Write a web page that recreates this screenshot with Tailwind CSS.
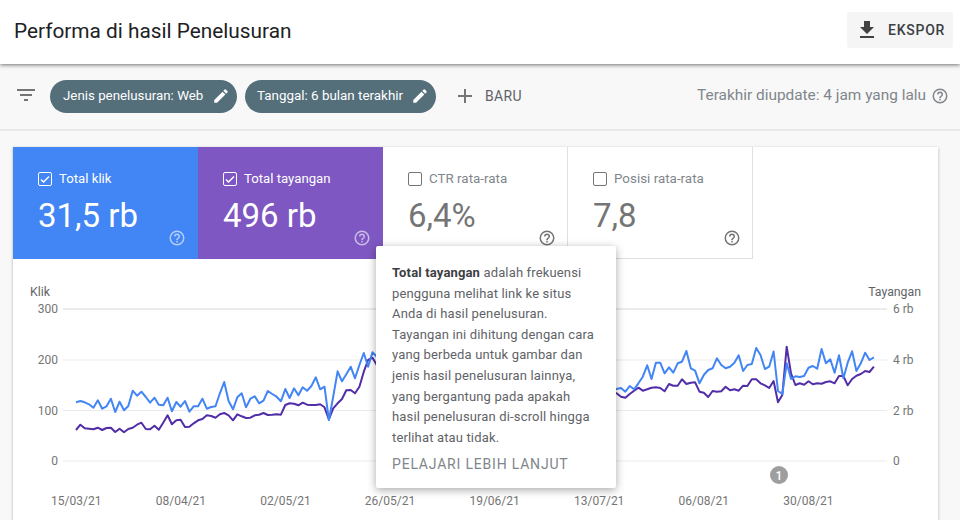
<!DOCTYPE html>
<html lang="en">
  <head>
    <meta charset="UTF-8" />
    <title>Performa di hasil Penelusuran</title>
    <script src="https://cdn.jsdelivr.net/npm/@tailwindcss/browser@4"></script>
  </head>
  <body class="w-[960px] h-[520px] overflow-hidden bg-[#f8f8f8] font-[Roboto,sans-serif]">
    <!-- header -->
    <header class="relative z-10 h-[64px] bg-white shadow-[0_1px_4px_rgba(0,0,0,0.55)] flex items-center justify-between pl-[14px] pr-[7px]">
      <h1 class="text-[20.8px] leading-[28px] text-[#202124] -mt-[2px]">Performa di hasil Penelusuran</h1>
      <button class="w-[106px] h-[36px] rounded-[3px] bg-[#f5f5f5] flex items-center pl-[8px] text-[#3c4043] -mt-[4px]">
        <svg class="w-[24px] h-[24px]" viewBox="0 0 24 24" fill="#424242"><path d="M19 9h-4V3H9v6H5l7 7 7-7zM5 18v2h14v-2H5z" /></svg>
        <span class="ml-[9px] text-[14px] font-medium tracking-[0.75px]">EKSPOR</span>
      </button>
    </header>

    <!-- filter bar -->
    <div class="h-[67px] border-b-2 border-[#e8e8e8] flex items-center pb-[1px] pl-[14px] pr-[10px]">
      <svg class="w-[24px] h-[24px] text-[#757575] -mt-[2px]" viewBox="0 0 24 24" fill="currentColor"><path d="M10 18h4v-2h-4v2zM3 6v2h18V6H3zm3 7h12v-2H6v2z" /></svg>
      <div class="ml-[12px] h-[33px] w-[187px] rounded-full bg-[#546e7a] flex items-center justify-between pl-[13px] pr-[7px] text-white text-[13.3px]">
        <span>Jenis penelusuran: Web</span>
        <svg class="w-[18px] h-[18px]" viewBox="0 0 24 24" fill="#fff"><path d="M3 17.25V21h3.75L17.81 9.94l-3.75-3.75L3 17.25zM20.71 7.04a1 1 0 0 0 0-1.41l-2.34-2.34a1 1 0 0 0-1.41 0l-1.83 1.83 3.75 3.75 1.83-1.83z" /></svg>
      </div>
      <div class="ml-[8px] h-[33px] w-[191px] rounded-full bg-[#546e7a] flex items-center justify-between pl-[12px] pr-[7px] text-white text-[13.4px]">
        <span>Tanggal: 6 bulan terakhir</span>
        <svg class="w-[18px] h-[18px]" viewBox="0 0 24 24" fill="#fff"><path d="M3 17.25V21h3.75L17.81 9.94l-3.75-3.75L3 17.25zM20.71 7.04a1 1 0 0 0 0-1.41l-2.34-2.34a1 1 0 0 0-1.41 0l-1.83 1.83 3.75 3.75 1.83-1.83z" /></svg>
      </div>
      <svg class="ml-[17px] w-[24px] h-[24px]" viewBox="0 0 24 24" fill="#757575"><path d="M19 13h-6v6h-2v-6H5v-2h6V5h2v6h6v2z" /></svg>
      <span class="ml-[8px] text-[14px] tracking-[0.3px] text-[#5f6368]">BARU</span>
      <span class="ml-auto text-[15.4px] text-[#80868b]">Terakhir diupdate: 4 jam yang lalu</span>
      <svg class="ml-[5px] mr-[1px] w-[18px] h-[18px]" viewBox="0 0 24 24" fill="#80868b"><path d="M11 18h2v-2h-2v2zm1-16a10 10 0 1 0 0 20 10 10 0 0 0 0-20zm0 18a8 8 0 1 1 0-16 8 8 0 0 1 0 16zm0-14a4 4 0 0 0-4 4h2a2 2 0 1 1 4 0c0 2-3 1.75-3 5h2c0-2.25 3-2.5 3-5a4 4 0 0 0-4-4z" /></svg>
    </div>

    <!-- main card -->
    <main class="relative mt-[16px] ml-[13px] w-[925px] h-[373px] bg-white shadow-[0_1px_3px_rgba(0,0,0,0.28)]">
      <div class="flex h-[112px]">
        <div class="w-[185px] bg-[#4285f4] text-white relative pl-[25px] pt-[24px]">
          <div class="flex items-center gap-[7px] text-[13.2px] leading-[16px]">
            <span class="w-[14px] h-[14px] border border-white rounded-[2px] flex items-center justify-center">
              <svg class="w-[12px] h-[12px]" viewBox="0 0 24 24" fill="#fff"><path d="M9 16.2 4.8 12l-1.9 1.9L9 20 21 8l-1.9-1.9z" /></svg>
            </span>
            Total klik
          </div>
          <div class="mt-[9px] text-[33px] leading-[40px]">31,5 rb</div>
          <svg class="absolute right-[12px] bottom-[12px] w-[18px] h-[18px]" viewBox="0 0 24 24" fill="#ffffff" fill-opacity="0.6"><path d="M11 18h2v-2h-2v2zm1-16a10 10 0 1 0 0 20 10 10 0 0 0 0-20zm0 18a8 8 0 1 1 0-16 8 8 0 0 1 0 16zm0-14a4 4 0 0 0-4 4h2a2 2 0 1 1 4 0c0 2-3 1.75-3 5h2c0-2.25 3-2.5 3-5a4 4 0 0 0-4-4z" /></svg>
        </div>
        <div class="w-[185px] bg-[#7e57c2] text-white relative pl-[25px] pt-[24px]">
          <div class="flex items-center gap-[7px] text-[13.2px] leading-[16px]">
            <span class="w-[14px] h-[14px] border border-white rounded-[2px] flex items-center justify-center">
              <svg class="w-[12px] h-[12px]" viewBox="0 0 24 24" fill="#fff"><path d="M9 16.2 4.8 12l-1.9 1.9L9 20 21 8l-1.9-1.9z" /></svg>
            </span>
            Total tayangan
          </div>
          <div class="mt-[9px] text-[33px] leading-[40px]">496 rb</div>
          <svg class="absolute right-[12px] bottom-[12px] w-[18px] h-[18px]" viewBox="0 0 24 24" fill="#ffffff" fill-opacity="0.6"><path d="M11 18h2v-2h-2v2zm1-16a10 10 0 1 0 0 20 10 10 0 0 0 0-20zm0 18a8 8 0 1 1 0-16 8 8 0 0 1 0 16zm0-14a4 4 0 0 0-4 4h2a2 2 0 1 1 4 0c0 2-3 1.75-3 5h2c0-2.25 3-2.5 3-5a4 4 0 0 0-4-4z" /></svg>
        </div>
        <div class="w-[185px] border-r border-b border-[#e0e0e0] text-[#757575] relative pl-[25px] pt-[24px]">
          <div class="flex items-center gap-[7px] text-[13.4px] leading-[16px] text-[#80868b]">
            <span class="w-[14px] h-[14px] border border-[#757575] rounded-[2px]"></span>
            CTR rata-rata
          </div>
          <div class="mt-[9px] text-[33px] leading-[40px]">6,4%</div>
          <svg class="absolute right-[11px] bottom-[11px] w-[18px] h-[18px]" viewBox="0 0 24 24" fill="#757575"><path d="M11 18h2v-2h-2v2zm1-16a10 10 0 1 0 0 20 10 10 0 0 0 0-20zm0 18a8 8 0 1 1 0-16 8 8 0 0 1 0 16zm0-14a4 4 0 0 0-4 4h2a2 2 0 1 1 4 0c0 2-3 1.75-3 5h2c0-2.25 3-2.5 3-5a4 4 0 0 0-4-4z" /></svg>
        </div>
        <div class="w-[185px] border-r border-b border-[#e0e0e0] text-[#757575] relative pl-[25px] pt-[24px]">
          <div class="flex items-center gap-[7px] text-[13.4px] leading-[16px] text-[#80868b]">
            <span class="w-[14px] h-[14px] border border-[#757575] rounded-[2px]"></span>
            Posisi rata-rata
          </div>
          <div class="mt-[9px] text-[33px] leading-[40px]">7,8</div>
          <svg class="absolute right-[11px] bottom-[11px] w-[18px] h-[18px]" viewBox="0 0 24 24" fill="#757575"><path d="M11 18h2v-2h-2v2zm1-16a10 10 0 1 0 0 20 10 10 0 0 0 0-20zm0 18a8 8 0 1 1 0-16 8 8 0 0 1 0 16zm0-14a4 4 0 0 0-4 4h2a2 2 0 1 1 4 0c0 2-3 1.75-3 5h2c0-2.25 3-2.5 3-5a4 4 0 0 0-4-4z" /></svg>
        </div>
      </div>

      <!-- chart, drawn in page coordinates -->
      <svg class="block" width="925" height="261" viewBox="13 259 925 261" font-family="Roboto, sans-serif" font-size="12" fill="#757575">
        <g stroke="#ebebeb" stroke-width="1">
          <line x1="63" x2="887" y1="309" y2="309" stroke-width="2" />
          <line x1="63" x2="887" y1="360" y2="360" />
          <line x1="63" x2="887" y1="410.5" y2="410.5" />
          <line x1="63" x2="887" y1="461" y2="461" />
        </g>
        <text x="30" y="296" fill="#5f6368" font-size="12.3">Klik</text>
        <text x="921" y="296" fill="#5f6368" font-size="12.3" text-anchor="end">Tayangan</text>
        <g text-anchor="end">
          <text x="58" y="313">300</text>
          <text x="58" y="364">200</text>
          <text x="58" y="415">100</text>
          <text x="58" y="465">0</text>
        </g>
        <text x="893" y="313">6 rb</text>
        <text x="893" y="364">4 rb</text>
        <text x="893" y="415">2 rb</text>
        <text x="893" y="465">0</text>
        <g text-anchor="middle">
          <text x="76.3" y="505">15/03/21</text>
          <text x="180.9" y="505">08/04/21</text>
          <text x="285.5" y="505">02/05/21</text>
          <text x="390" y="505">26/05/21</text>
          <text x="494.6" y="505">19/06/21</text>
          <text x="599.2" y="505">13/07/21</text>
          <text x="703.8" y="505">06/08/21</text>
          <text x="808.4" y="505">30/08/21</text>
        </g>
        <polyline id="linePurple" fill="none" stroke="#512da8" stroke-width="2" stroke-linejoin="round" />
        <polyline id="lineBlue" fill="none" stroke="#4285f4" stroke-width="2" stroke-linejoin="round" />
        <circle cx="779" cy="475" r="9" fill="#9e9e9e" />
        <text x="779" y="479.5" fill="#fff" font-size="12" font-weight="500" text-anchor="middle">1</text>
      </svg>

      <!-- tooltip -->
      <div class="absolute left-[363px] top-[99px] w-[240px] h-[242px] bg-white rounded-[2px] shadow-[0_2px_8px_rgba(0,0,0,0.35)] pl-[16px] pt-[17px] text-[13px] leading-[20.6px] text-[#5f6368] tracking-[0.15px]">
        <p><b class="font-bold text-[#3c4043]">Total tayangan</b> adalah frekuensi<br />pengguna melihat link ke situs<br />Anda di hasil penelusuran.<br />Tayangan ini dihitung dengan cara<br />yang berbeda untuk gambar dan<br />jenis hasil penelusuran lainnya,<br />yang bergantung pada apakah<br />hasil penelusuran di-scroll hingga<br />terlihat atau tidak.</p>
        <div class="mt-[6px] text-[14px] leading-[20px] tracking-[0.8px] text-[#80868b]">PELAJARI LEBIH LANJUT</div>
      </div>
    </main>

    <script>
      // daily values read off the chart, as y in page pixels; the stretch under the tooltip is hidden anyway
      const blueA = [402.3,401,402.3,404.3,407.7,400.3,408.7,406.3,398.7,412,401.7,410.3,406,390.7,395.7,391.7,397,402.7,397.7,404.7,405.3,397.7,411.3,402,406.7,401,411.7,406.3,406.3,398.7,408.7,407,406.3,393.3,382,401,409.3,397.3,393.3,407.3,398.7,396.3,403.3,400.7,391,394,396.7,401.3,389,398,388.3,395.3,387.3,390.7,386,377.3,389.3,386.7,420,396.7,371.3,381.3,374.3,366.7,378.3,365,353,366.7,352.3,356.7];
      const blueB = [390.7,389,388,391.7,386,389.3,383.3,376.7,365.3,379,362.7,362.7,373.3,367.3,372.7,363.3,361.7,351,368.3,370.7,383.3,375,370,368.3,358.3,365,368.3,366.7,362.7,355.3,371,365,364,348,355,369,366.7,351.5,391,394,363.3,379,376.3,377,376,367.7,366,368.7,349,363.3,359.3,372.7,355.3,378.3,362.7,351.3,371,363.3,352.7,360,357.3];
      const purpleA = [430,424.7,428.3,428.7,429.3,427.7,430,428,427.7,432,428.7,432.3,429,427.7,424.7,422.7,429,429.3,425.7,429.7,422.7,415.3,424.3,420.3,419.7,427,426.7,423.3,420.3,419,415.3,416,417.7,414.3,413,415.3,420.3,414.3,416.3,418,417.7,415.3,414.7,413,415,414.7,414.3,414.7,405,403.3,403.7,405.3,402.7,404.7,405,405,404.3,407.3,419.3,408.3,403.3,399,390.3,390,393.3,386.7,371.7,360,357.7,365];
      const purpleB = [392.7,393.3,396.7,397.7,394,390.7,387.7,390.7,389.3,387.7,387.3,388,391.3,384,385.7,385.7,379.3,384,382.7,382.3,391.7,392.7,397,391,391.7,391.3,386.7,390.3,389.3,390.7,385.7,386,379.3,379.3,383.3,385.3,388,381,402.3,395,346.7,373.3,385,383.3,384.7,381.3,384.3,383.3,383.7,382,381.3,383.3,376,376,385.3,379,375.7,374,371,372,366.7];

      function points(partA, partB) {
        const day = (i) => (76 + i * 4.36).toFixed(1);
        const a = partA.map((y, i) => day(i) + "," + y);
        const b = partB.map((y, i) => day(i + 123) + "," + y);
        return a.concat(b).join(" ");
      }

      document.getElementById("lineBlue").setAttribute("points", points(blueA, blueB));
      document.getElementById("linePurple").setAttribute("points", points(purpleA, purpleB));
    </script>
  </body>
</html>
